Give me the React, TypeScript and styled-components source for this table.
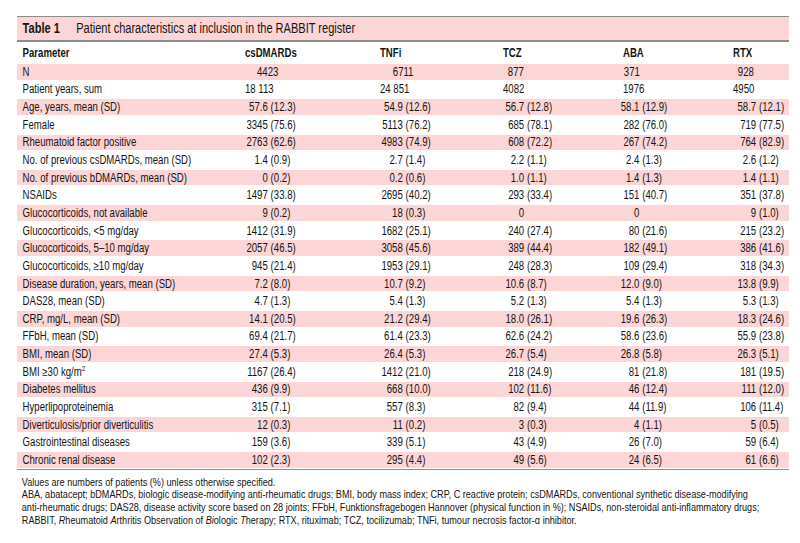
import styled, { createGlobalStyle } from "styled-components";

const GlobalStyle = createGlobalStyle`
  html, body {
    margin: 0;
    overflow: hidden;
    background: #ffffff;
  }
  body {
    font-family: "Liberation Sans", Arial, sans-serif;
    color: #141414;
  }
`;

const PINK = "#fcd5d6";
const RULE = "#8c8c8c";

// the source uses a condensed face; the sheet is laid out wide and squeezed
const SQUEEZE = 0.8;

// column widths (before squeeze): parameter | csDMARDs | TNFi | TCZ | ABA | RTX
const GRID = "285px 168.75px 153.75px 150px 137.5px 70px";
const NUM_W = [28.5, 28.5, 26.5, 20.5, 29];
const N_INDENT = [15, 16, 6, 1, 6];

type Row = {
  label: React.ReactNode;
  values: string[];
  mode?: "n" | "left";
};

const rows: Row[] = [
  { label: "N", values: ["4423", "6711", "877", "371", "928"], mode: "n" },
  { label: "Patient years, sum", values: ["18 113", "24 851", "4082", "1976", "4950"], mode: "left" },
  { label: "Age, years, mean (SD)", values: ["57.6 (12.3)", "54.9 (12.6)", "56.7 (12.8)", "58.1 (12.9)", "58.7 (12.1)"] },
  { label: "Female", values: ["3345 (75.6)", "5113 (76.2)", "685 (78.1)", "282 (76.0)", "719 (77.5)"] },
  { label: "Rheumatoid factor positive", values: ["2763 (62.6)", "4983 (74.9)", "608 (72.2)", "267 (74.2)", "764 (82.9)"] },
  { label: "No. of previous csDMARDs, mean (SD)", values: ["1.4 (0.9)", "2.7 (1.4)", "2.2 (1.1)", "2.4 (1.3)", "2.6 (1.2)"] },
  { label: "No. of previous bDMARDs, mean (SD)", values: ["0 (0.2)", "0.2 (0.6)", "1.0 (1.1)", "1.4 (1.3)", "1.4 (1.1)"] },
  { label: "NSAIDs", values: ["1497 (33.8)", "2695 (40.2)", "293 (33.4)", "151 (40.7)", "351 (37.8)"] },
  { label: "Glucocorticoids, not available", values: ["9 (0.2)", "18 (0.3)", "0", "0", "9 (1.0)"] },
  { label: "Glucocorticoids, <5 mg/day", values: ["1412 (31.9)", "1682 (25.1)", "240 (27.4)", "80 (21.6)", "215 (23.2)"] },
  { label: "Glucocorticoids, 5–10 mg/day", values: ["2057 (46.5)", "3058 (45.6)", "389 (44.4)", "182 (49.1)", "386 (41.6)"] },
  { label: "Glucocorticoids, ≥10 mg/day", values: ["945 (21.4)", "1953 (29.1)", "248 (28.3)", "109 (29.4)", "318 (34.3)"] },
  { label: "Disease duration, years, mean (SD)", values: ["7.2 (8.0)", "10.7 (9.2)", "10.6 (8.7)", "12.0 (9.0)", "13.8 (9.9)"] },
  { label: "DAS28, mean (SD)", values: ["4.7 (1.3)", "5.4 (1.3)", "5.2 (1.3)", "5.4 (1.3)", "5.3 (1.3)"] },
  { label: "CRP, mg/L, mean (SD)", values: ["14.1 (20.5)", "21.2 (29.4)", "18.0 (26.1)", "19.6 (26.3)", "18.3 (24.6)"] },
  { label: "FFbH, mean (SD)", values: ["69.4 (21.7)", "61.4 (23.3)", "62.6 (24.2)", "58.6 (23.6)", "55.9 (23.8)"] },
  { label: "BMI, mean (SD)", values: ["27.4 (5.3)", "26.4 (5.3)", "26.7 (5.4)", "26.8 (5.8)", "26.3 (5.1)"] },
  {
    label: (
      <>
        BMI ≥30 kg/m<sup>2</sup>
      </>
    ),
    values: ["1167 (26.4)", "1412 (21.0)", "218 (24.9)", "81 (21.8)", "181 (19.5)"],
  },
  { label: "Diabetes mellitus", values: ["436 (9.9)", "668 (10.0)", "102 (11.6)", "46 (12.4)", "111 (12.0)"] },
  { label: "Hyperlipoproteinemia", values: ["315 (7.1)", "557 (8.3)", "82 (9.4)", "44 (11.9)", "106 (11.4)"] },
  { label: "Diverticulosis/prior diverticulitis", values: ["12 (0.3)", "11 (0.2)", "3 (0.3)", "4 (1.1)", "5 (0.5)"] },
  { label: "Gastrointestinal diseases", values: ["159 (3.6)", "339 (5.1)", "43 (4.9)", "26 (7.0)", "59 (6.4)"] },
  { label: "Chronic renal disease", values: ["102 (2.3)", "295 (4.4)", "49 (5.6)", "24 (6.5)", "61 (6.6)"] },
];

const Page = styled.div`
  padding: 16px 0 0 17px;
  width: 772px;
`;

const Sheet = styled.div`
  width: ${772 / SQUEEZE}px;
  transform: scaleX(${SQUEEZE});
  transform-origin: 0 0;
`;

const Caption = styled.div`
  display: flex;
  align-items: center;
  height: 23px;
  padding-left: 7px;
  background: ${PINK};
  border-top: 1.5px solid ${RULE};
  border-bottom: 2px solid ${RULE};
  font-size: 13.8px;
`;

const CaptionLabel = styled.span`
  font-weight: bold;
  width: 67px;
`;

const HeadRow = styled.div`
  display: grid;
  grid-template-columns: ${GRID};
  align-items: center;
  height: 21px;
  font-size: 12px;
  font-weight: bold;
`;

const Body = styled.div`
  border-bottom: 1.5px solid ${RULE};
`;

const DataRow = styled.div<{ $shade: boolean }>`
  display: grid;
  grid-template-columns: ${GRID};
  align-items: center;
  height: 17.65px;
  box-sizing: border-box;
  border-top: 1.5px solid #fff;
  border-bottom: 1.5px solid #fff;
  background: ${(p) => (p.$shade ? PINK : "#fff")};
  background-clip: padding-box;
  font-size: 12px;
  white-space: nowrap;

  sup {
    font-size: 8px;
    line-height: 0;
    vertical-align: 5px;
  }
`;

const LabelCell = styled.div`
  padding-left: 7px;
`;

const HeadLabel = styled.div`
  padding-left: 7px;
`;

const Value = styled.div`
  display: flex;
`;

const Num = styled.span<{ $w: number }>`
  display: flex;
  justify-content: flex-end;
  flex: none;
  width: ${(p) => p.$w}px;
`;

const Rest = styled.span`
  margin-left: 3.5px;
`;

const Notes = styled.div`
  padding: 6px 0 0 6px;
  font-size: 11.4px;
  line-height: 12.6px;
  white-space: nowrap;
`;

function ValueCell({ text, col, mode }: { text: string; col: number; mode?: "n" | "left" }) {
  if (mode === "left") return <Value>{text}</Value>;
  if (mode === "n") return <Value style={{ paddingLeft: N_INDENT[col] }}>{text}</Value>;
  const cut = text.indexOf(" (");
  const num = cut < 0 ? text : text.slice(0, cut);
  const rest = cut < 0 ? "" : text.slice(cut + 1);
  return (
    <Value>
      <Num $w={NUM_W[col]}>{num}</Num>
      {rest && <Rest>{rest}</Rest>}
    </Value>
  );
}

export default function App() {
  return (
    <Page>
      <GlobalStyle />
      <Sheet>
        <Caption>
          <CaptionLabel>Table 1</CaptionLabel>
          Patient characteristics at inclusion in the RABBIT register
        </Caption>
        <HeadRow>
          <HeadLabel>Parameter</HeadLabel>
          <div>csDMARDs</div>
          <div>TNFi</div>
          <div>TCZ</div>
          <div>ABA</div>
          <div>RTX</div>
        </HeadRow>
        <Body>
          {rows.map((r, i) => (
            <DataRow key={i} $shade={i % 2 === 0}>
              <LabelCell>{r.label}</LabelCell>
              {r.values.map((v, c) => (
                <ValueCell key={c} text={v} col={c} mode={r.mode} />
              ))}
            </DataRow>
          ))}
        </Body>
        <Notes>
          Values are numbers of patients (%) unless otherwise specified.
          <br />
          ABA, abatacept; bDMARDs, biologic disease-modifying anti-rheumatic drugs; BMI, body mass index; CRP, C reactive
          protein; csDMARDs, conventional synthetic disease-modifying
          <br />
          anti-rheumatic drugs; DAS28, disease activity score based on 28 joints; FFbH, Funktionsfragebogen Hannover
          (physical function in %); NSAIDs, non-steroidal anti-inflammatory drugs;
          <br />
          RABBIT, <i>R</i>heumatoid <i>A</i>rthritis Observation of <i>Bi</i>ologic <i>T</i>herapy; RTX, rituximab; TCZ,
          tocilizumab; TNFi, tumour necrosis factor-α inhibitor.
        </Notes>
      </Sheet>
    </Page>
  );
}
